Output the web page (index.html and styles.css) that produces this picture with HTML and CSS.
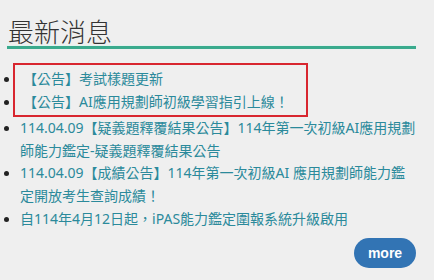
FILE: index.html
```html
<!DOCTYPE html>
<html lang="zh-Hant">
<head>
  <meta charset="UTF-8">
  <meta name="viewport" content="width=device-width, initial-scale=1">
  <title>最新消息</title>
  <link rel="stylesheet" href="styles.css">
</head>
<body>

<div class="news">
  <h2 class="news-title">最新消息</h2>

  <!-- pinned announcements -->
  <ul class="news-list pinned">
    <li><a href="#">【公告】考試樣題更新</a></li>
    <li><a href="#">【公告】AI應用規劃師初級學習指引上線！</a></li>
  </ul>

  <ul class="news-list">
    <li><a href="#">114.04.09【疑義題釋覆結果公告】114年第一次初級AI應用規劃師能力鑑定-疑義題釋覆結果公告</a></li>
    <li><a href="#">114.04.09【成績公告】114年第一次初級AI 應用規劃師能力鑑定開放考生查詢成績！</a></li>
    <li><a href="#">自114年4月12日起，iPAS能力鑑定圍報系統升級啟用</a></li>
  </ul>

  <div class="news-footer">
    <a class="more-btn" href="#">more</a>
  </div>
</div>

</body>
</html>
```

FILE: styles.css
```css
* { margin: 0; padding: 0; box-sizing: border-box; }
body, html { width: 100%; height: 100%; background: #efefef; }
body { font-family: 'Noto Sans', 'Noto Sans CJK TC', sans-serif; }

.news { padding: 16px 18px 0 7px; }
.news-title { font-family: 'Noto Sans CJK TC', sans-serif; font-size: 26px; font-weight: 300; line-height: 30px; color: #333; padding-left: 1px; border-bottom: 3px solid #3aaa8d; box-shadow: 0 -1px 0 #e2f3ef inset; }

.news-list { list-style: none; font-size: 14px; line-height: 22.6px; padding-left: 13px; }
.news-list li { position: relative; }
.news-list li::before { content: ""; position: absolute; left: -16px; top: 9px; width: 5px; height: 5px; border-radius: 50%; background: #222; }
.news-list a { color: #2b8a9b; text-decoration: none; }

/* pinned box */
.news-list.pinned { width: 295px; margin: 14px 0 0 6px; padding: 3px 0 2px 8px; border: 2px solid #d8262f; }
.news-list.pinned li::before { left: -19px; }

.news-footer { display: flex; justify-content: flex-end; margin-top: 8px; }
.more-btn { display: flex; align-items: center; justify-content: center; width: 62px; height: 30px; border-radius: 15px; background: #3274b4; color: white; font-family: 'Liberation Sans', sans-serif; font-size: 14px; font-weight: bold; text-decoration: none; }
```
